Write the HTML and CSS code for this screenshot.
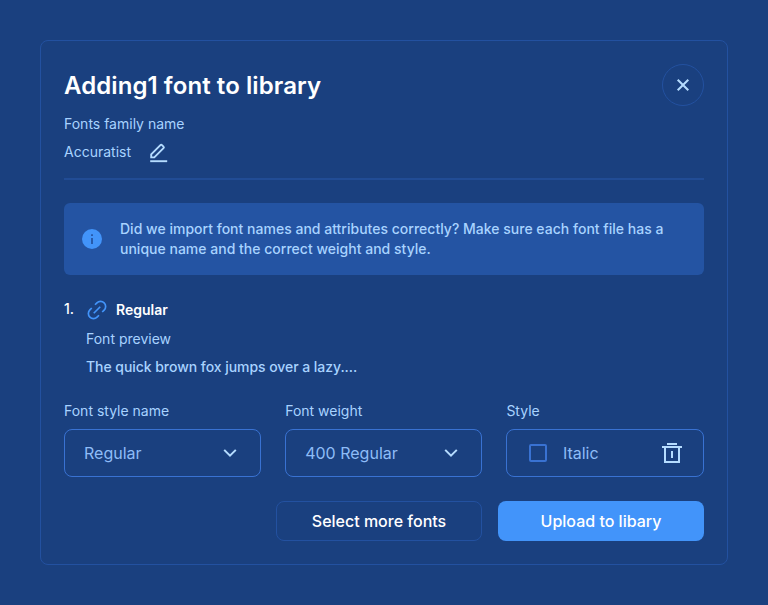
FILE: index.html
```
<!DOCTYPE html>
<html lang="en">
<head>
<meta charset="utf-8">
<title>Add font to library</title>
<link rel="stylesheet" href="styles.css">
</head>
<body>
<main class="dialog">
  <header class="dialog-header">
    <h1 class="title">Adding1 font to library</h1>
    <button class="close" aria-label="Close">
      <svg width="14" height="14" viewBox="0 0 14 14"><path d="M1.700 1.700l10.600 10.600M12.300 1.700L1.700 12.300"/></svg>
    </button>
  </header>
  <section class="family">
    <p class="label">Fonts family name</p>
    <div class="family-row">
      <span class="family-name">Accuratist</span>
      <svg class="edit" width="20" height="22" viewBox="0 0 20 22"><path d="M3.200 15.400v-3.100l9.200-9.200q.8-.8 1.600 0l1.500 1.500q.8.8 0 1.600L6.300 15.400z"/><path d="M2.200 19.200h17"/></svg>
    </div>
  </section>
  <section class="notice">
    <svg class="info" width="20" height="20" viewBox="0 0 20 20"><circle cx="10" cy="10" r="10"/><path d="M9.100 5.200h1.800v1.900H9.100zM9.100 8.900h1.800v6.100H9.100z"/></svg>
    <p class="notice-text">Did we import font names and attributes correctly? Make sure each font file has a unique name and the correct weight and style.</p>
  </section>
  <section class="font-item">
    <div class="font-head">
      <span class="number">1.</span>
      <svg class="link" width="20" height="20" viewBox="0 0 20 20"><path transform="rotate(-45 10 10)" d="M7.700 4.900H5a5.100 5.100 0 0 0 0 10.200H7.700M12.300 4.900h2.700a5.100 5.100 0 0 1 0 10.200H12.300M5.400 10h9.200"/></svg>
      <span class="font-name">Regular</span>
    </div>
    <p class="preview-label">Font preview</p>
    <p class="preview">The quick brown fox jumps over a lazy....</p>
  </section>
  <section class="fields">
    <div class="field">
      <p class="label">Font style name</p>
      <div class="box"><span>Regular</span><svg class="chevron" width="14" height="10" viewBox="0 0 14 10"><path d="M1.200 1.900L7 7.700l5.800-5.800"/></svg></div>
    </div>
    <div class="field">
      <p class="label">Font weight</p>
      <div class="box"><span>400 Regular</span><svg class="chevron" width="14" height="10" viewBox="0 0 14 10"><path d="M1.200 1.900L7 7.700l5.800-5.800"/></svg></div>
    </div>
    <div class="field">
      <p class="label">Style</p>
      <div class="box style-box"><i class="checkbox"></i><span class="style-name">Italic</span><svg class="trash" width="20" height="20" viewBox="0 0 20 20"><path d="M5 1h10M0 4h20M3 4v15h14V4M10 8v7"/></svg></div>
    </div>
  </section>
  <footer class="actions">
    <button class="button outline">Select more fonts</button>
    <button class="button primary">Upload to libary</button>
  </footer>
</main>
</body>
</html>
```
FILE: styles.css
```
* { box-sizing: border-box; }
body {
  margin: 0;
  padding: 40px;
  background: #1a407f;
  color: #a8d3ff;
  font: 400 14px/20px Inter, "Liberation Sans", sans-serif;
}
h1, p { margin: 0; }
button { font: inherit; padding: 0; cursor: pointer; }
svg { flex: none; display: block; fill: none; }
.dialog {
  width: 688px;
  height: 525px;
  padding: 23px;
  border: 1px solid #2351a0;
  border-radius: 8px;
}
.dialog-header { display: flex; justify-content: space-between; align-items: center; height: 42px; }
.title { padding-top: 2px; color: #fff; font-size: 24px; line-height: 32px; font-weight: 600; letter-spacing: 0.08px; }
.close {
  display: flex;
  align-items: center;
  justify-content: center;
  width: 42px;
  height: 42px;
  background: none;
  border: 1px solid #2351a0;
  border-radius: 50%;
}
.close path { stroke: #b5dcff; stroke-width: 2; }
.family { padding: 8px 0 16px; border-bottom: 2px solid #214c95; }
.family-row { display: flex; gap: 17px; height: 20px; margin-top: 8px; }
.edit path { stroke: #b5dcff; stroke-width: 1.900; }
.notice {
  display: flex;
  align-items: center;
  gap: 18px;
  height: 72px;
  margin-top: 23px;
  padding: 0 18px;
  border-radius: 6px;
  background: #2454a3;
}
.info circle { fill: #4294fa; }
.info path { fill: #2454a3; }
.notice-text { font-weight: 500; letter-spacing: 0.01px; }
.font-item { margin-top: 25px; }
.font-head { display: flex; color: #fff; font-weight: 600; }
.number { width: 23px; margin-top: -1px; font-weight: 500; }
.link { margin-right: 9px; overflow: visible; }
.link path { stroke: #4294fa; stroke-width: 1.700; }
.preview-label { margin: 9px 0 0 22px; }
.preview { margin: 8px 0 0 22px; font-weight: 500; letter-spacing: -0.05px; }
.fields { display: grid; grid-template-columns: 197.2px 197.2px 197.6px; gap: 24px; margin-top: 24px; }
.box {
  display: flex;
  align-items: center;
  justify-content: space-between;
  height: 48px;
  margin-top: 8px;
  padding: 0 23.500px 0 19px;
  border: 1px solid #3972d2;
  border-radius: 8px;
  color: #8ebcf7;
  font-size: 16px;
}
.chevron path { stroke: #b5dcff; stroke-width: 2; }
.style-box { padding: 0 21px 0 22px; }
.checkbox { width: 18px; height: 18px; margin-right: 15.500px; border: 2px solid #3972d2; border-radius: 2px; }
.style-name { flex: 1; }
.trash path { stroke: #b5dcff; stroke-width: 2; }
.actions { display: flex; justify-content: flex-end; gap: 16px; margin-top: 24px; }
.button { width: 206px; height: 40px; border-radius: 8px; color: #fff; font-size: 16px; font-weight: 500; }
.outline { background: none; border: 1px solid #2351a0; }
.primary { background: #4294fa; border: 0; }
```
